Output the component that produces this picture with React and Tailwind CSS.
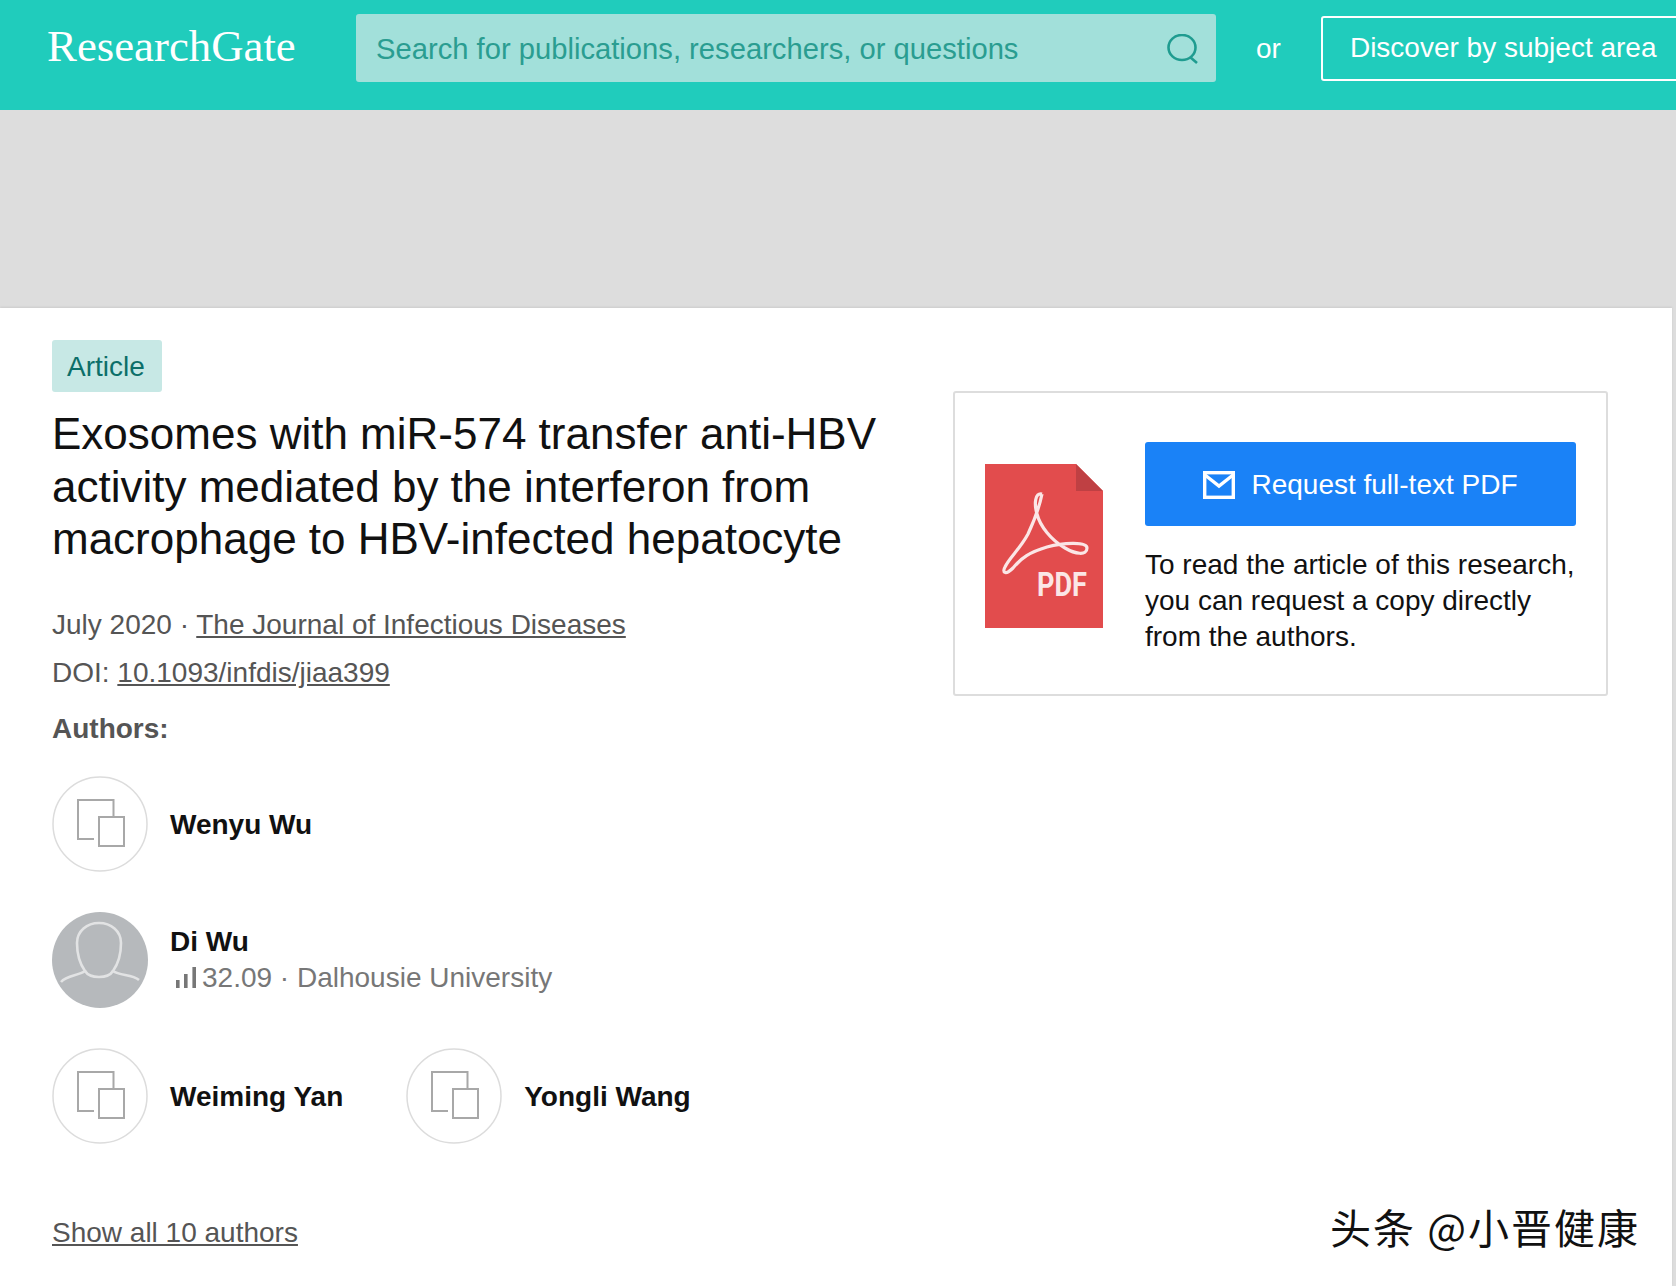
import React from 'react'

const sans = "font-['Liberation_Sans',Arial,sans-serif]"

const PlaceholderAvatar = () => (
  <svg width="96" height="96" viewBox="0 0 96 96" className="shrink-0" fill="none">
    <circle cx="48" cy="48" r="47" stroke="#dcdcdc" strokeWidth="1.5" />
    <path d="M42 63H26V24H61.5V41" stroke="#a8a8a8" strokeWidth="2" />
    <rect x="47" y="41" width="25" height="29" stroke="#a8a8a8" strokeWidth="2" />
  </svg>
)

const PhotoAvatar = () => (
  <svg width="96" height="96" viewBox="0 0 96 96" className="shrink-0" fill="none">
    <circle cx="48" cy="48" r="48" fill="#b6b9bc" />
    <path
      d="M9 70C15 63 26 64 33 59C28 52 25 42 25 31C25 19 35 11 47 11C59 11 69 19 69 31C69 42 66 52 61 59C68 64 80 62 87 68"
      stroke="#e2e3e4"
      strokeWidth="2.6"
    />
    <path d="M33 59C38 67 56 67 61 59" stroke="#e2e3e4" strokeWidth="2.6" />
  </svg>
)

const PdfIcon = () => (
  <svg width="118" height="164" viewBox="0 0 118 164" className="shrink-0 mt-[22px]" fill="none">
    <path d="M0 0H91L118 27V164H0Z" fill="#e24c4d" />
    <path d="M91 0V27H118Z" fill="#bf4043" />
    <path
      d="M57 30C50 28 49 40 52 50C55 62 66 76 80 84C90 90 102 92 102 84C102 78 80 78 62 83C45 88 36 94 28 104C20 112 17 108 20 103C24 94 35 85 43 70C50 55 55 40 57 30"
      stroke="#fbe6e6"
      strokeWidth="3.2"
    />
    <text x="52" y="132" fill="#fbe6e6" fontFamily="Roboto, sans-serif" fontWeight="700" fontSize="34" textLength="50" lengthAdjust="spacingAndGlyphs">
      PDF
    </text>
  </svg>
)

const MailIcon = () => (
  <svg width="32" height="28" viewBox="0 0 32 28" fill="none" stroke="#fff" strokeWidth="3.4" className="shrink-0">
    <rect x="1.7" y="1.7" width="28.6" height="24.6" />
    <path d="M2 4L16 15L30 4" />
  </svg>
)

const SearchIcon = () => (
  <svg width="32" height="30" viewBox="0 0 32 30" fill="none" stroke="#1f9c90" strokeWidth="2.6" className="mt-[2px]">
    <ellipse cx="15" cy="13.5" rx="13.5" ry="12.5" />
    <path d="M23 23L30 29" />
  </svg>
)

const Bars = () => (
  <svg width="20" height="21" viewBox="0 0 20 21" fill="#777" className="shrink-0">
    <rect x="0" y="13" width="3.6" height="8" />
    <rect x="8" y="7" width="3.6" height="14" />
    <rect x="16.4" y="0" width="3.6" height="21" />
  </svg>
)

const Author = ({ name }) => (
  <div className="flex items-center gap-[22px]">
    <PlaceholderAvatar />
    <span className="mt-[2px] text-[28px] font-bold text-[#111]">{name}</span>
  </div>
)

const App = () => {
  return (
    <div className={`${sans} min-h-screen bg-[#dddddd] overflow-hidden`}>
      {/* Header */}
      <header className="flex h-[110px] bg-[#20ccbc] overflow-hidden">
        <div className="w-[356px] shrink-0 pl-[47px] pt-[14px] font-['Liberation_Serif',serif] text-[44.8px] leading-[64px] text-white">
          ResearchGate
        </div>
        <div className="flex items-center justify-between w-[860px] shrink-0 h-[68px] mt-[14px] pl-[20px] pr-[17px] bg-[#a2e0da] rounded-[3px]">
          <span className="mt-[3px] text-[29.2px] text-[#2a9d91]">Search for publications, researchers, or questions</span>
          <SearchIcon />
        </div>
        <span className="ml-[40px] mt-[31px] text-[28px] leading-[36px] text-white">or</span>
        <div className="ml-[40px] mt-[16px] h-[65px] shrink-0 pl-[27px] pr-[30px] border-2 border-white rounded-[3px] text-[28px] leading-[59px] text-white whitespace-nowrap">
          Discover by subject area
        </div>
      </header>

      <div className="h-[198px] bg-[#dddddd]" />

      {/* Article */}
      <main className="relative flex justify-between h-[978px] mr-[4px] bg-white shadow-[0_-1px_2px_rgba(0,0,0,0.08)]">
        <section className="pl-[52px] pt-[32px]">
          <span className="inline-block h-[52px] w-[110px] pl-[15px] bg-[#c7e8e5] rounded-[3px] text-[28px] leading-[53px] text-[#0c6f69]">
            Article
          </span>
          <h1 className="w-[860px] mt-[16px] text-[44px] leading-[52.5px] text-[#111]">
            Exosomes with miR-574 transfer anti-HBV activity mediated by the interferon from macrophage to HBV-infected hepatocyte
          </h1>
          <p className="mt-[35px] text-[28px] leading-[48px] text-[#555]">
            July 2020 · <a className="underline">The Journal of Infectious Diseases</a>
          </p>
          <p className="text-[28px] leading-[48px] text-[#555]">
            DOI: <a className="underline">10.1093/infdis/jiaa399</a>
          </p>
          <p className="mt-[8px] text-[28px] leading-[48px] font-bold text-[#555]">Authors:</p>

          <div className="flex flex-col gap-[40px] mt-[23px]">
            <Author name="Wenyu Wu" />
            <div className="flex items-center gap-[22px]">
              <PhotoAvatar />
              <div>
                <div className="text-[28px] leading-[36px] font-bold text-[#111]">Di Wu</div>
                <div className="flex items-center text-[28px] leading-[36px] text-[#777]">
                  <span className="ml-[6px] mr-[6px]"><Bars /></span>
                  32.09 · Dalhousie University
                </div>
              </div>
            </div>
            <div className="flex gap-[63px]">
              <Author name="Weiming Yan" />
              <Author name="Yongli Wang" />
            </div>
          </div>

          <a className="block mt-[65px] text-[28px] leading-[48px] text-[#555] underline">Show all 10 authors</a>
        </section>

        {/* Request card */}
        <aside className="flex gap-[42px] w-[655px] h-[305px] mt-[83px] mr-[64px] pt-[49px] pl-[30px] border-2 border-[#dddddd] rounded-[3px]">
          <PdfIcon />
          <div className="w-[431px]">
            <div className="flex items-center justify-center gap-[16px] h-[84px] pt-[1px] bg-[#1a82f7] rounded-[3px] text-[28px] text-white">
              <MailIcon />
              Request full-text PDF
            </div>
            <p className="mt-[21px] text-[28px] leading-[36px] text-[#111]">
              To read the article of this research, you can request a copy directly from the authors.
            </p>
          </div>
        </aside>

        {/* Watermark */}
        <div className="absolute right-[32px] bottom-[35px] font-['Noto_Sans_CJK_SC',sans-serif] text-[41px] leading-[50px] tracking-[2px] text-[#111]">
          头条 @小晋健康
        </div>
      </main>
    </div>
  )
}

export default App
